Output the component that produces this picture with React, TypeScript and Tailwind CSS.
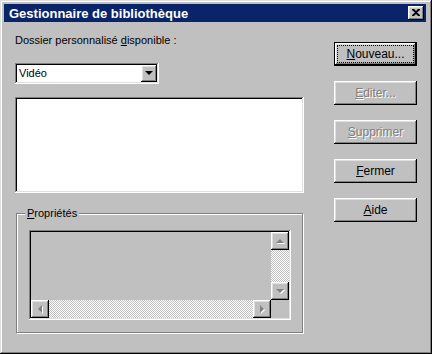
import type { ReactNode } from 'react'

const raised =
  'shadow-[inset_-1px_-1px_#000,inset_1px_1px_#fff,inset_-2px_-2px_#808080,inset_2px_2px_#dfdfdf]'
const sunken =
  'shadow-[inset_-1px_-1px_#fff,inset_1px_1px_#808080,inset_-2px_-2px_#dfdfdf,inset_2px_2px_#000]'
const dither =
  'bg-[repeating-conic-gradient(#c0c0c0_0_25%,#ffffff_0_50%)] bg-[length:2px_2px]'

function Arrow({ dir, disabled }: { dir: 'up' | 'down' | 'left' | 'right'; disabled?: boolean }) {
  const pts = {
    up: '0,4 4,0 8,4',
    down: '0,0 8,0 4,4',
    left: '4,0 4,8 0,4',
    right: '0,0 0,8 4,4',
  }[dir]
  const vertical = dir === 'up' || dir === 'down'
  const w = vertical ? 8 : 4
  const h = vertical ? 4 : 8
  return (
    <svg width={w + 1} height={h + 1} viewBox={`0 0 ${w + 1} ${h + 1}`}>
      {disabled && <polygon points={pts} fill="#fff" transform="translate(1,1)" />}
      <polygon points={pts} fill={disabled ? '#808080' : '#000'} />
    </svg>
  )
}

function Btn({
  children,
  isDefault,
  disabled,
}: {
  children: ReactNode
  isDefault?: boolean
  disabled?: boolean
}) {
  if (isDefault) {
    return (
      <div className="h-[24px] w-[83px] border border-black">
        <div className={`relative flex h-full items-center justify-center ${raised}`}>
          <span className="absolute inset-[3px] outline outline-1 outline-dotted outline-black" />
          <span className="text-black">{children}</span>
        </div>
      </div>
    )
  }
  return (
    <div className={`flex h-[24px] w-[83px] items-center justify-center ${raised}`}>
      <span
        className={
          disabled ? 'text-[#808080] [text-shadow:1px_1px_0_#fff]' : 'text-black'
        }
      >
        {children}
      </span>
    </div>
  )
}

function ScrollBtn({ dir }: { dir: 'up' | 'down' | 'left' | 'right' }) {
  return (
    <div className={`flex h-[18px] w-[18px] shrink-0 items-center justify-center bg-[#c0c0c0] ${raised}`}>
      <Arrow dir={dir} disabled />
    </div>
  )
}

export default function App() {
  return (
    <div
      className={`flex h-[354px] w-[432px] flex-col bg-[#c0c0c0] pb-[4px] pl-[4px] pr-[6px] pt-[4px] font-['Liberation_Sans',Arial,sans-serif] text-[11px] leading-[13px] text-black shadow-[inset_-1px_-1px_#000,inset_1px_1px_#dfdfdf,inset_-2px_-2px_#808080,inset_2px_2px_#fff]`}
    >
      <div className="flex h-[18px] items-center justify-between bg-[#0a246a] pl-[5px] pr-[2px]">
        <span className="text-[13px] font-bold text-white">Gestionnaire de bibliothèque</span>
        <div className={`flex h-[14px] w-[16px] items-center justify-center bg-[#c0c0c0] ${raised}`}>
          <svg width="8" height="7" viewBox="0 0 8 7" className="mb-[1px]">
            <path d="M0 0h2l2 2 2-2h2v1L5 3.5 8 6v1H6L4 5 2 7H0V6l3-2.5L0 1z" fill="#000" />
          </svg>
        </div>
      </div>

      <div className="flex flex-1">
        <div className="flex w-[300px] flex-col pl-[11px]">
          <div className="mt-[12px]">
            Dossier personnalisé <u className="underline-offset-[1px]">d</u>isponible :
          </div>

          <div className={`mt-[16px] flex h-[21px] w-[144px] items-center bg-white p-[2px] ${sunken}`}>
            <span className="flex-1 pl-[2px]">Vidéo</span>
            <div className={`flex h-[17px] w-[16px] items-center justify-center bg-[#c0c0c0] ${raised}`}>
              <Arrow dir="down" />
            </div>
          </div>

          <div className={`mt-[13px] h-[96px] w-[289px] bg-white ${sunken}`} />

          <div className="relative mt-[20px] ml-[1px] h-[120px] w-[287px] border border-[#808080] shadow-[inset_1px_1px_#fff,1px_1px_#fff]">
            <span className="absolute -top-[7px] left-[8px] bg-[#c0c0c0] px-[2px]">
              <u>P</u>ropriétés
            </span>
            <div className={`ml-[12px] mt-[16px] h-[90px] w-[262px] bg-[#c0c0c0] p-[2px] ${sunken}`}>
              <div className="flex h-full">
                <div className="flex flex-1 flex-col">
                  <div className="flex-1" />
                  <div className="flex h-[18px]">
                    <ScrollBtn dir="left" />
                    <div className={`flex-1 ${dither}`} />
                    <ScrollBtn dir="right" />
                  </div>
                </div>
                <div className="flex w-[18px] flex-col">
                  <ScrollBtn dir="up" />
                  <div className={`flex-1 ${dither}`} />
                  <ScrollBtn dir="down" />
                  <div className="h-[18px]" />
                </div>
              </div>
            </div>
          </div>
        </div>

        <div className="ml-[30px] mt-[20px] flex flex-col gap-[15px] text-[12px]">
          <Btn isDefault>
            <u>N</u>ouveau...
          </Btn>
          <Btn disabled>
            <u>E</u>diter...
          </Btn>
          <Btn disabled>
            <u>S</u>upprimer
          </Btn>
          <Btn>
            <u>F</u>ermer
          </Btn>
          <Btn>
            <u>A</u>ide
          </Btn>
        </div>
      </div>
    </div>
  )
}
